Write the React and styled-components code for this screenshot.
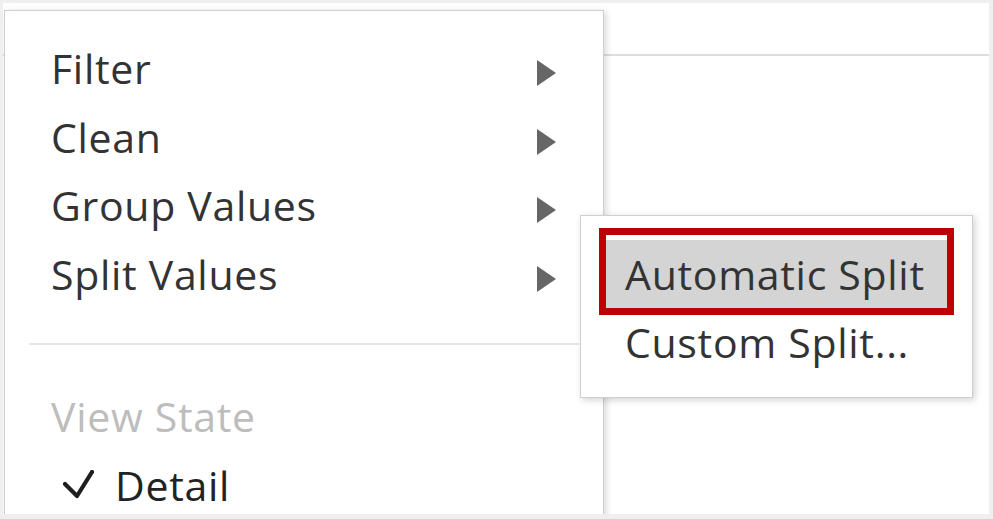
import React from "react";
import styled, { createGlobalStyle } from "styled-components";

const GlobalStyle = createGlobalStyle`
  html, body {
    margin: 0;
    padding: 0;
    background: #fff;
  }
  body {
    font-family: "Open Sans", "Noto Sans", sans-serif;
  }
`;

const Frame = styled.div`
  position: relative;
  box-sizing: border-box;
  width: 993px;
  height: 519px;
  border-style: solid;
  border-color: #efefef;
  border-width: 3px 4px 5px 3px;
  background: #fff;
  overflow: hidden;
  display: flex;
  flex-direction: column;
`;

const Toolbar = styled.div`
  height: 51px;
  flex-shrink: 0;
  border-bottom: 2px solid #dddddd;
`;

const Canvas = styled.div`
  flex: 1;
`;

// the context menu sits over the canvas, so it is placed absolutely
const Menu = styled.div`
  position: absolute;
  left: 1px;
  top: 7px;
  width: 600px;
  box-sizing: border-box;
  padding: 23px 0 40px;
  background: #fff;
  border: 1px solid #cfcfcf;
  box-shadow: 2px 2px 7px rgba(0, 0, 0, 0.16);
`;

const MenuRow = styled.div`
  display: flex;
  align-items: center;
  justify-content: space-between;
  height: 68.5px;
  padding: ${(props) => (props.checked ? "0 47px 0 58px" : "0 47px 0 46px")};
  font-size: 41px;
  line-height: 68.5px;
  letter-spacing: 0.7px;
  color: ${(props) =>
    props.muted ? "#bdbdbd" : props.checked ? "#222" : "#333"};
  white-space: nowrap;
`;

const Label = styled.span`
  display: flex;
  align-items: center;
  gap: 21px;
`;

const Arrow = styled.svg`
  width: 19px;
  height: 26px;
  margin-top: 10px;
  flex-shrink: 0;
`;

const Divider = styled.div`
  height: 2px;
  margin: 35px 24px 37px 24px;
  background: #e6e6e6;
`;

const SubMenu = styled.div`
  position: absolute;
  left: 577px;
  top: 212px;
  width: 393px;
  box-sizing: border-box;
  padding: 24px 0 21px;
  background: #fff;
  border: 1px solid #cfcfcf;
  box-shadow: 2px 2px 7px rgba(0, 0, 0, 0.18);
`;

const SubItem = styled.div`
  position: relative;
  margin: 0 25px;
  padding-left: 19px;
  height: 68px;
  font-size: 41px;
  line-height: 68px;
  letter-spacing: 0.7px;
  color: #333;
  white-space: nowrap;
  background: ${(props) => (props.active ? "#d4d4d4" : "transparent")};
`;

// red annotation frame drawn around the highlighted option
const Callout = styled.div`
  position: absolute;
  top: -12px;
  left: -7px;
  right: -7px;
  bottom: -7px;
  border: 7px solid #c00000;
  pointer-events: none;
`;

const ArrowIcon = () => (
  <Arrow viewBox="0 0 19 26">
    <polygon points="0,0 19,13 0,26" fill="#666" />
  </Arrow>
);

const CheckIcon = () => (
  <svg width="31" height="29" viewBox="0 0 31 29">
    <polyline
      points="2,14 14,26 29,2"
      fill="none"
      stroke="#1e1e1e"
      strokeWidth="4.2"
      strokeLinecap="round"
      strokeLinejoin="round"
    />
  </svg>
);

const items = ["Filter", "Clean", "Group Values", "Split Values"];

export default function App() {
  return (
    <>
      <GlobalStyle />
      <Frame>
        <Toolbar />
        <Canvas />
        <Menu>
          {items.map((item) => (
            <MenuRow key={item}>
              <Label>{item}</Label>
              <ArrowIcon />
            </MenuRow>
          ))}
          <Divider />
          <MenuRow muted>
            <Label>View State</Label>
          </MenuRow>
          <MenuRow checked>
            <Label>
              <CheckIcon />
              Detail
            </Label>
          </MenuRow>
        </Menu>
        <SubMenu>
          <SubItem active>
            Automatic Split
            <Callout />
          </SubItem>
          <SubItem>Custom Split...</SubItem>
        </SubMenu>
      </Frame>
    </>
  );
}
